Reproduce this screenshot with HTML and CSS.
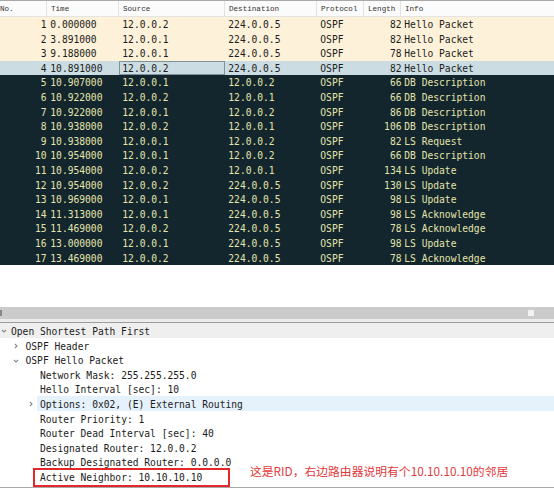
FILE: index.html
```html
<!DOCTYPE html>
<html lang="zh">
<head>
<meta charset="utf-8">
<title>OSPF capture</title>
<link rel="stylesheet" href="styles.css">
</head>
<body>
<div class="screen">
  <div class="plist">
    <div class="phead">
      <div class="hc hno">No.</div>
      <div class="hc">Time</div>
      <div class="hc">Source</div>
      <div class="hc">Destination</div>
      <div class="hc">Protocol</div>
      <div class="hc">Length</div>
      <div class="hc hlast">Info</div>
    </div>
    <div class="row hello"><span class="c r">1</span><span class="c">0.000000</span><span class="c">12.0.0.2</span><span class="c">224.0.0.5</span><span class="c">OSPF</span><span class="c r">82</span><span class="c">Hello Packet</span></div>
    <div class="row hello"><span class="c r">2</span><span class="c">3.891000</span><span class="c">12.0.0.1</span><span class="c">224.0.0.5</span><span class="c">OSPF</span><span class="c r">82</span><span class="c">Hello Packet</span></div>
    <div class="row hello"><span class="c r">3</span><span class="c">9.188000</span><span class="c">12.0.0.1</span><span class="c">224.0.0.5</span><span class="c">OSPF</span><span class="c r">78</span><span class="c">Hello Packet</span></div>
    <div class="row sel"><span class="c r">4</span><span class="c">10.891000</span><span class="c focus">12.0.0.2</span><span class="c">224.0.0.5</span><span class="c">OSPF</span><span class="c r">82</span><span class="c">Hello Packet</span></div>
    <div class="row dark"><span class="c r">5</span><span class="c">10.907000</span><span class="c">12.0.0.1</span><span class="c">12.0.0.2</span><span class="c">OSPF</span><span class="c r">66</span><span class="c">DB Description</span></div>
    <div class="row dark"><span class="c r">6</span><span class="c">10.922000</span><span class="c">12.0.0.2</span><span class="c">12.0.0.1</span><span class="c">OSPF</span><span class="c r">66</span><span class="c">DB Description</span></div>
    <div class="row dark"><span class="c r">7</span><span class="c">10.922000</span><span class="c">12.0.0.1</span><span class="c">12.0.0.2</span><span class="c">OSPF</span><span class="c r">86</span><span class="c">DB Description</span></div>
    <div class="row dark"><span class="c r">8</span><span class="c">10.938000</span><span class="c">12.0.0.2</span><span class="c">12.0.0.1</span><span class="c">OSPF</span><span class="c r">106</span><span class="c">DB Description</span></div>
    <div class="row dark"><span class="c r">9</span><span class="c">10.938000</span><span class="c">12.0.0.1</span><span class="c">12.0.0.2</span><span class="c">OSPF</span><span class="c r">82</span><span class="c">LS Request</span></div>
    <div class="row dark"><span class="c r">10</span><span class="c">10.954000</span><span class="c">12.0.0.1</span><span class="c">12.0.0.2</span><span class="c">OSPF</span><span class="c r">66</span><span class="c">DB Description</span></div>
    <div class="row dark"><span class="c r">11</span><span class="c">10.954000</span><span class="c">12.0.0.2</span><span class="c">12.0.0.1</span><span class="c">OSPF</span><span class="c r">134</span><span class="c">LS Update</span></div>
    <div class="row dark"><span class="c r">12</span><span class="c">10.954000</span><span class="c">12.0.0.2</span><span class="c">224.0.0.5</span><span class="c">OSPF</span><span class="c r">130</span><span class="c">LS Update</span></div>
    <div class="row dark"><span class="c r">13</span><span class="c">10.969000</span><span class="c">12.0.0.1</span><span class="c">224.0.0.5</span><span class="c">OSPF</span><span class="c r">98</span><span class="c">LS Update</span></div>
    <div class="row dark"><span class="c r">14</span><span class="c">11.313000</span><span class="c">12.0.0.1</span><span class="c">224.0.0.5</span><span class="c">OSPF</span><span class="c r">98</span><span class="c">LS Acknowledge</span></div>
    <div class="row dark"><span class="c r">15</span><span class="c">11.469000</span><span class="c">12.0.0.2</span><span class="c">224.0.0.5</span><span class="c">OSPF</span><span class="c r">78</span><span class="c">LS Acknowledge</span></div>
    <div class="row dark"><span class="c r">16</span><span class="c">13.000000</span><span class="c">12.0.0.1</span><span class="c">224.0.0.5</span><span class="c">OSPF</span><span class="c r">98</span><span class="c">LS Update</span></div>
    <div class="row dark"><span class="c r">17</span><span class="c">13.469000</span><span class="c">12.0.0.2</span><span class="c">224.0.0.5</span><span class="c">OSPF</span><span class="c r">78</span><span class="c">LS Acknowledge</span></div>
  </div>

  <div class="gap"></div>

  <div class="hscroll">
    <span class="harrow"></span>
    <span class="grip"></span>
  </div>
  <div class="hsep"></div>

  <div class="tree">
    <div class="tr l0 selrow"><svg class="ex" viewBox="0 0 6 6"><path d="M1 2 L3 4 L5 2" /></svg><span>Open Shortest Path First</span></div>
    <div class="tr l1"><svg class="ex" viewBox="0 0 6 6"><path d="M2 1 L4 3 L2 5" /></svg><span>OSPF Header</span></div>
    <div class="tr l1"><svg class="ex" viewBox="0 0 6 6"><path d="M1 2 L3 4 L5 2" /></svg><span>OSPF Hello Packet</span></div>
    <div class="tr l2"><span>Network Mask: 255.255.255.0</span></div>
    <div class="tr l2"><span>Hello Interval [sec]: 10</span></div>
    <div class="tr l2 hover"><svg class="ex" viewBox="0 0 6 6"><path d="M2 1 L4 3 L2 5" /></svg><span class="hl">Options: 0x02, (E) External Routing</span></div>
    <div class="tr l2"><span>Router Priority: 1</span></div>
    <div class="tr l2"><span>Router Dead Interval [sec]: 40</span></div>
    <div class="tr l2"><span>Designated Router: 12.0.0.2</span></div>
    <div class="tr l2"><span>Backup Designated Router: 0.0.0.0</span></div>
    <div class="tr l2 annot-row"><span>Active Neighbor: 10.10.10.10</span>
      <div class="redbox"></div>
      <div class="note">这是RID，右边路由器说明有个10.10.10.10的邻居</div>
    </div>
  </div>
  <div class="bottomline"></div>
</div>
</body>
</html>
```

FILE: styles.css
```css
* { box-sizing: border-box; }
html, body { margin: 0; padding: 0; background: #ffffff; }
.screen {
  width: 554px;
  height: 491px;
  overflow: hidden;
  position: relative;
  display: flex;
  flex-direction: column;
  font-family: "DejaVu Sans Mono", "Liberation Mono", monospace;
  font-size: 9.65px;
  color: #1c1c1c;
}

/* packet list */
.plist { display: flex; flex-direction: column; flex: none; }
.phead, .row {
  display: grid;
  grid-template-columns: 47px 72px 106px 92px 47px 37px 1fr;
}
.phead {
  height: 17px;
  background: #fbfbfb;
  border-top: 1px solid #a8a8a8;
  border-bottom: 1px solid #e4e4e4;
  font-family: "Liberation Mono", monospace;
  font-size: 7.6px;
  color: #333;
  align-items: center;
}
.hc {
  height: 100%;
  display: flex;
  align-items: center;
  padding-left: 4px;
  border-right: 1px solid #e2e2e2;
  white-space: nowrap;
  overflow: hidden;
}
.hno { padding-left: 0; }
.hlast { border-right: none; }

.row {
  height: 14.6px;
  white-space: nowrap;
}
.c {
  padding-left: 3.3px;
  padding-top: 1.1px;
  line-height: 13.5px;
  overflow: hidden;
}
.c.r { text-align: right; padding-left: 0; padding-right: 0; }
.row .c:first-child { padding-right: 0.5px; }
.row .c:nth-child(6) { padding-right: 0; margin-right: -0.5px; }
.hello { background: #fdf2d9; color: #1c1c1c; }
.sel { background: #cbdce3; color: #1c1c1c; }
.focus { outline: 1px solid #7f9199; outline-offset: -1px; }
.dark { background: #13262d; color: #e4e4ab; }

.gap { height: 41.8px; flex: none; }

/* horizontal scrollbar & separator */
.hscroll {
  height: 12px;
  background: #cbcbcb;
  display: flex;
  align-items: center;
  justify-content: space-between;
  padding-right: 20px;
  flex: none;
}
.harrow { width: 2px; height: 6px; background: #6a6a6a; opacity: 0.7; }
.grip { width: 6px; height: 6px; background: #f2f2f2; }
.hsep {
  height: 4.5px;
  background: #ececec;
  border-bottom: 1px solid #9c9c9c;
  flex: none;
}

/* detail tree */
.tree { display: flex; flex-direction: column; flex: none; }
.tr {
  height: 14.6px;
  display: flex;
  align-items: flex-start;
  white-space: nowrap;
  position: relative;
}
.tr span { line-height: 13.2px; padding-top: 1.6px; }
.l0 { padding-left: 11px; }
.l1 { padding-left: 25.5px; }
.l2 { padding-left: 40px; }
.ex {
  position: absolute;
  width: 6px;
  height: 6px;
  top: 5px;
  fill: none;
  stroke: #8a8a8a;
  stroke-width: 1.1;
}
.l0 .ex { left: 0.5px; }
.l1 .ex { left: 12.5px; }
.l2 .ex { left: 27.5px; }
.selrow { background: #efefef; }
.hover::before {
  content: "";
  position: absolute;
  left: 37px;
  right: 0;
  top: 0;
  bottom: 0;
  background: #e5f1fb;
}
.hover .hl { position: relative; }

.annot-row { position: relative; }
.redbox {
  position: absolute;
  left: 33px;
  top: -1px;
  width: 197px;
  height: 19px;
  border: 2px solid #e3272b;
}
.note {
  position: absolute;
  left: 250px;
  top: -5px;
  line-height: 14px;
  font-family: "Noto Sans CJK SC", "Noto Sans", sans-serif;
  font-size: 11.8px;
  color: #e3383a;
  white-space: nowrap;
}
.bottomline {
  margin-top: 3.4px;
  height: 1px;
  background: #a9a9a9;
  flex: none;
}
```
